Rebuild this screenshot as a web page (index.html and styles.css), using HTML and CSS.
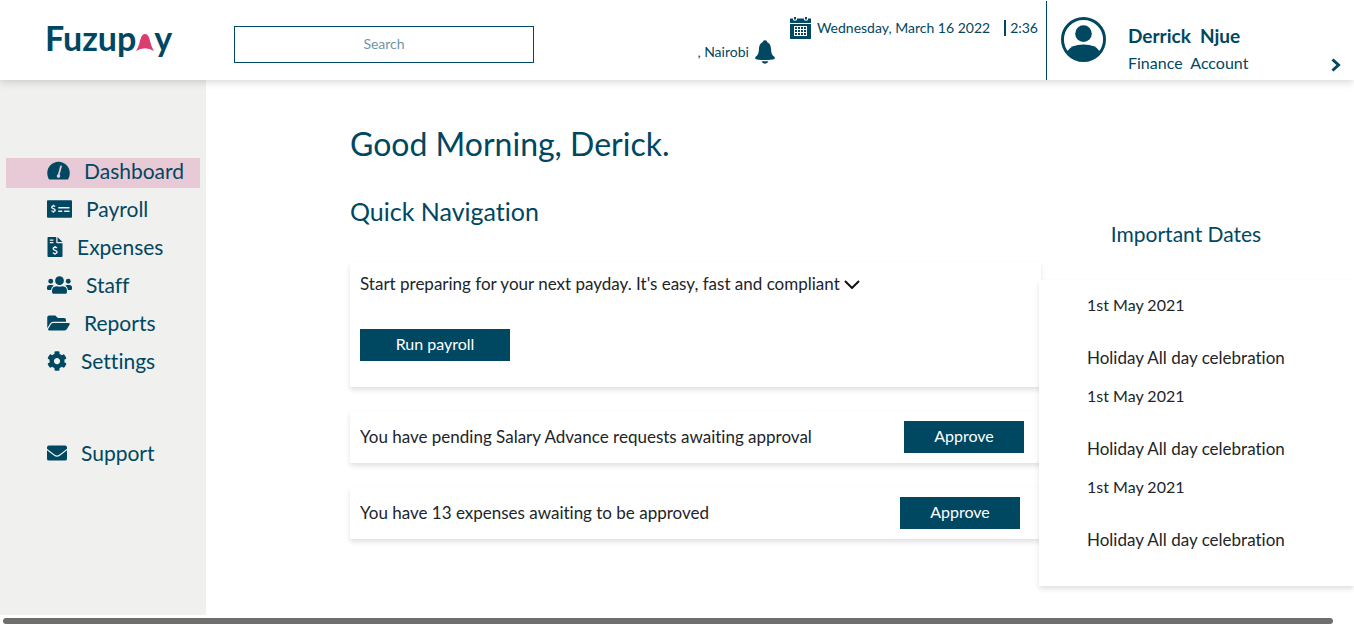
FILE: index.html
```html
<!DOCTYPE html>
<html lang="en">
<head>
<meta charset="utf-8">
<meta name="viewport" content="width=device-width, initial-scale=1">
<title>Fuzupay</title>
<link rel="stylesheet" href="styles.css">
</head>
<body>
<header class="topbar">
  <a class="logo" href="#" aria-label="Fuzupay"><span>Fuzup</span><svg class="logo-mark" viewBox="0 0 18 17" aria-hidden="true"><path d="M0 17C2.500 13 3.500 9 4.500 5Q6 0 9 0T13.500 5C14.500 9 15.500 13 18 17Q9 11.500 0 17Z"/></svg><span>y</span></a>
  <input class="search" type="text" placeholder="Search" aria-label="Search">
  <div class="location">
    <span>, Nairobi</span>
    <button class="icon-button" aria-label="Notifications"><svg class="bell" viewBox="0 0 20 24" aria-hidden="true"><circle cx="10" cy="2.500" r="2.300"/><path d="M10 2C5.500 2 4.300 5 4 9C3.700 13.500 3 15 .7 16.700C-.2 17.700 0 19 1 19.200Q3 20 10 20T19 19.200C20 19 20.200 17.700 19.300 16.700C17 15 16.300 13.500 16 9C15.700 5 14.500 2 10 2Z"/><path d="M6.500 21.300H13.500Q12.500 23.700 10 23.700T6.500 21.300Z"/></svg></button>
  </div>
  <div class="today">
    <svg class="calendar" viewBox="0 0 21 22" aria-hidden="true"><path d="M0 1.500H3V3Q5 4.500 7 3V1.500H14V3Q16 4.500 18 3V1.500H21V6H0ZM4 0H6V2.500H4ZM15 0H17V2.500H15ZM0 7H21V22H0Z"/><path class="cut" d="M4 9H17V19H4Z"/><path d="M5 10H7V12H5ZM8 10H10V12H8ZM11 10H13V12H11ZM14 10H16V12H14ZM5 13H7V15H5ZM8 13H10V15H8ZM11 13H13V15H11ZM14 13H16V15H14ZM5 16H7V18H5ZM8 16H10V18H8ZM11 16H13V18H11ZM14 16H16V18H14Z"/></svg>
    <span class="date">Wednesday, March 16 2022</span>
    <time class="clock">2:36</time>
  </div>
  <div class="profile">
    <svg class="avatar" viewBox="0 0 46 46" aria-hidden="true"><circle class="ring" cx="23" cy="23" r="21.500"/><circle cx="23" cy="17" r="8.500"/><path d="M6.500 35Q10 28 23 28T39.500 35Q34 44 23 44T6.500 35Z"/></svg>
    <div class="who"><strong class="name">Derrick&nbsp; Njue</strong><span class="role">Finance&nbsp; Account</span></div>
    <button class="icon-button next" aria-label="Open account menu"><svg class="chevron" viewBox="0 0 10 14" aria-hidden="true"><path d="M1.500 1.500L7.500 7L1.500 12.500"/></svg></button>
  </div>
</header>

<div class="shell">
  <nav class="sidebar" aria-label="Main">
    <a class="item active" href="#"><svg class="i-mid" viewBox="0 0 576 512" aria-hidden="true"><path d="M288 20C129 20 0 149 0 308c0 55 14 108 39 150 6 10 16 15 27 15h443c11 0 22-5 28-15 25-42 39-95 39-150C576 149 447 20 288 20Z"/><path class="needle" d="M352 135L294 350"/><circle class="hub" cx="288" cy="386" r="46"/></svg>Dashboard</a>
    <a class="item" href="#"><svg class="i-wide" viewBox="0 0 640 512" aria-hidden="true"><rect y="32" width="640" height="448" rx="24"/><path class="line" d="M288 225H576M288 315H390M440 315H576"/><path class="dollar" d="M208 190C190 170 120 172 120 210C120 255 210 240 210 285C210 325 140 325 116 298M164 145V180M164 314V350"/></svg>Payroll</a>
    <a class="item" href="#"><svg class="i-thin" viewBox="0 0 384 512" aria-hidden="true"><path d="M24 0H224V136Q224 160 248 160H384V488Q384 512 360 512H24Q0 512 0 488V24Q0 0 24 0ZM256 0L384 128H256Z"/><path class="line" d="M58 80H150M58 145H150"/><path class="dollar" d="M240 280C215 250 145 255 145 300C145 350 245 335 245 385C245 435 165 435 140 400M192 230V264M192 420V455"/></svg>Expenses</a>
    <a class="item" href="#"><svg class="i-wide" viewBox="0 0 640 512" aria-hidden="true"><circle cx="96" cy="160" r="62"/><circle cx="544" cy="160" r="62"/><circle cx="320" cy="144" r="112"/><path d="M64 256H128Q155 256 172 273C130 298 111 335 104 384H32Q0 384 0 352V320Q0 256 64 256ZM576 256H512Q485 256 468 273C510 298 529 335 536 384H608Q640 384 640 352V320Q640 256 576 256ZM240 288Q320 310 400 288Q512 300 512 403V432Q512 480 464 480H176Q128 480 128 432V403Q128 300 240 288Z"/></svg>Staff</a>
    <a class="item" href="#"><svg class="i-mid" viewBox="0 0 576 512" aria-hidden="true"><path d="M573 295L500 419A64 64 0 0 1 445 448H45C26 448 15 428 24 412L97 288A64 64 0 0 1 152 256H552C571 256 582 279 573 295ZM152 224H480V176Q480 128 432 128H272L208 64H48Q0 64 0 112V390L69 272A96 96 0 0 1 152 224Z"/></svg>Reports</a>
    <a class="item" href="#"><svg class="i-square" viewBox="0 0 512 512" aria-hidden="true"><path d="M487.400 315.700l-42.600-24.600c4.300-23.200 4.300-47 0-70.200l42.600-24.600c4.900-2.800 7.100-8.600 5.500-14-11.100-35.600-30-67.800-54.700-94.600-3.800-4.100-10-5.100-14.800-2.300L380.800 110c-17.900-15.400-38.500-27.300-60.800-35.100V25.800c0-5.600-3.900-10.500-9.400-11.700-36.700-8.200-74.300-7.800-109.200 0-5.500 1.200-9.400 6.100-9.400 11.700V75c-22.200 7.900-42.800 19.800-60.800 35.100L88.700 85.500c-4.900-2.800-11-1.900-14.800 2.300-24.700 26.700-43.600 58.900-54.700 94.600-1.700 5.400.6 11.200 5.500 14L67.300 221c-4.300 23.200-4.300 47 0 70.200l-42.600 24.600c-4.900 2.800-7.100 8.600-5.500 14 11.100 35.600 30 67.800 54.700 94.600 3.800 4.100 10 5.100 14.800 2.300l42.600-24.600c17.900 15.400 38.500 27.300 60.800 35.100v49.200c0 5.600 3.900 10.500 9.400 11.700 36.700 8.200 74.300 7.800 109.200 0 5.500-1.200 9.400-6.100 9.400-11.700v-49.200c22.200-7.900 42.800-19.800 60.800-35.100l42.600 24.600c4.900 2.800 11 1.900 14.800-2.300 24.700-26.700 43.600-58.900 54.700-94.600 1.500-5.500-.7-11.300-5.600-14.100zM256 336c-44.100 0-80-35.900-80-80s35.900-80 80-80 80 35.900 80 80-35.900 80-80 80z"/></svg>Settings</a>
    <a class="item support" href="#"><svg class="i-square" viewBox="0 0 512 512" aria-hidden="true"><path d="M48 64H464Q512 64 512 112V144Q430 210 310 300Q256 340 202 300Q82 210 0 144V112Q0 64 48 64ZM0 184Q80 248 183 325Q256 378 329 325Q432 248 512 184V400Q512 448 464 448H48Q0 448 0 400Z"/></svg>Support</a>
  </nav>

  <main class="content">
    <section class="primary">
      <h1>Good Morning, Derick.</h1>
      <h2>Quick Navigation</h2>
      <div class="cards">
        <article class="card payday">
          <div class="lead"><p>Start preparing for your next payday. It's easy, fast and compliant</p><button class="icon-button dark" aria-label="Show details"><svg class="down" viewBox="0 0 16 9" aria-hidden="true"><path d="M1 1L8 8L15 1"/></svg></button></div>
          <button class="button large">Run payroll</button>
        </article>
        <article class="card request"><p>You have pending Salary Advance requests awaiting approval</p><button class="button">Approve</button></article>
        <article class="card request inset"><p>You have 13 expenses awaiting to be approved</p><button class="button">Approve</button></article>
      </div>
    </section>
    <aside class="dates">
      <h3>Important Dates</h3>
      <dl class="date-card">
        <div><dt>1st May 2021</dt><dd>Holiday All day celebration</dd></div>
        <div><dt>1st May 2021</dt><dd>Holiday All day celebration</dd></div>
        <div><dt>1st May 2021</dt><dd>Holiday All day celebration</dd></div>
      </dl>
    </aside>
  </main>
</div>
<div class="scroll-track" aria-hidden="true"><div class="scroll-thumb"></div></div>
</body>
</html>
```
FILE: styles.css
```css
:root {
  --navy: #004762;
  --ink: #212529;
  --shadow: 0 3px 5px rgba(0, 0, 0, 0.12);
}

* { box-sizing: border-box; }

body {
  margin: 0;
  min-height: 100vh;
  display: flex;
  flex-direction: column;
  background: #fff;
  color: var(--ink);
  font: 16px/24px Lato, "Open Sans", sans-serif;
  font-variant-ligatures: none;
}

h1, h2, h3, p, dl, dd { margin: 0; font-weight: 400; }
a { color: inherit; text-decoration: none; }
button, input { font: inherit; }
svg { flex: none; fill: currentColor; }

.topbar {
  position: relative;
  z-index: 1;
  display: flex;
  height: 80px;
  background: #fff;
  color: var(--navy);
  box-shadow: 0 2px 8px rgba(0, 0, 0, 0.16);
}

.logo {
  display: flex;
  align-items: baseline;
  width: 189px;
  margin-left: 45px;
  padding-top: 18px;
  font-size: 34px;
  line-height: 40px;
  font-weight: 700;
}
.logo-mark { width: 18px; height: 17px; fill: #dc3d70; }

.search {
  width: 300px;
  height: 37px;
  margin-top: 26px;
  padding: 0 12px 2px;
  border: 1px solid var(--navy);
  border-radius: 0;
  outline: 0;
  background: #fff;
  color: var(--navy);
  font-size: 14px;
  text-align: center;
}
.search::placeholder { color: #6f96a6; opacity: 1; }

.icon-button {
  display: flex;
  padding: 0;
  border: 0;
  background: none;
  color: inherit;
  cursor: pointer;
}
.icon-button.dark { color: #111; }

.location {
  display: flex;
  align-items: center;
  align-self: flex-start;
  gap: 6px;
  margin: 40px 15px 0 auto;
  font-size: 14px;
}
.bell { width: 20px; height: 24px; }

.today {
  display: flex;
  align-items: center;
  align-self: flex-start;
  margin: 16px 8px 0 0;
  font-size: 14px;
}
.calendar { width: 21px; height: 22px; margin-right: 6px; }
.calendar .cut { fill: #fff; }
.clock {
  margin-left: 14px;
  padding-left: 4px;
  border-left: 2px solid var(--navy);
  line-height: 16px;
}

.profile {
  display: flex;
  width: 308px;
  margin-top: 1px;
  padding: 16px 13px 0 14px;
  border-left: 1px solid var(--navy);
}
.avatar { width: 45px; height: 45px; }
.avatar .ring { fill: none; stroke: currentColor; stroke-width: 3; }
.who { flex: 1; margin-left: 22px; padding-top: 6px; }
.name, .role { display: block; }
.name { font-size: 19px; line-height: 26px; }
.role { line-height: 28px; }
.next { align-self: flex-end; margin-bottom: 8px; }
.chevron { width: 10px; height: 14px; fill: none; stroke: currentColor; stroke-width: 3; }

.shell { flex: 1; display: flex; }

.sidebar {
  width: 206px;
  flex: none;
  padding: 78px 6px 0;
  background: #f0f0ee;
  color: var(--navy);
  font-size: 21px;
}
.item {
  display: flex;
  align-items: center;
  gap: 14px;
  height: 30px;
  margin-bottom: 8px;
  padding: 0 0 4px 41px;
}
.item.active { background: #e8cad7; }
.item.support { margin-top: 62px; }
.item svg { height: 20px; }
.i-wide { width: 25px; }
.i-mid { width: 23px; }
.i-square { width: 20px; }
.i-thin { width: 16px; }
.item .line, .item .dollar, .item .needle { fill: none; stroke: #f0f0ee; stroke-width: 36; }
.item .needle { stroke: #e8cad7; stroke-width: 44; stroke-linecap: round; }
.item .hub { fill: #e8cad7; }

.content {
  flex: 1;
  display: grid;
  grid-template-columns: minmax(0, 1fr) 315px;
  padding: 47px 0 29px 144px;
}
.primary { margin-right: -2px; }

h1, h2, h3 { color: var(--navy); }
h1 { font-size: 32px; line-height: 34px; }
h2 { margin-top: 36px; font-size: 25px; line-height: 28px; }
h3 { font-size: 21px; line-height: 24px; }

.cards { display: grid; gap: 24px; margin-top: 37px; }
.card { padding: 10px; box-shadow: var(--shadow); }
.card p, .date-card dd { font-size: 17px; }
.payday { padding-bottom: 26px; }
.lead { display: flex; align-items: center; gap: 4px; }
.down { width: 16px; height: 9px; fill: none; stroke: currentColor; stroke-width: 2; }

.button {
  width: 120px;
  height: 32px;
  padding: 0 0 2px;
  border: 0;
  background: var(--navy);
  color: #fff;
}
.button.large { width: 150px; margin-top: 33px; display: block; }

.request {
  display: flex;
  align-items: center;
  justify-content: space-between;
  padding-right: 17px;
}
.request.inset { padding-right: 21px; }

.dates {
  position: relative;
  padding-top: 95px;
}
.dates h3 { padding-right: 21px; text-align: center; }
.date-card {
  margin-top: 34px;
  padding: 13px 12px 20px 48px;
  background: #fff;
  box-shadow: var(--shadow);
}
.date-card > div { padding-bottom: 14px; }
.date-card dt { margin-bottom: 29px; }

.scroll-track { height: 12px; padding: 3px 21px 3px 3px; }
.scroll-thumb { height: 6px; border-radius: 3px; background: #6e6e6e; }
```
